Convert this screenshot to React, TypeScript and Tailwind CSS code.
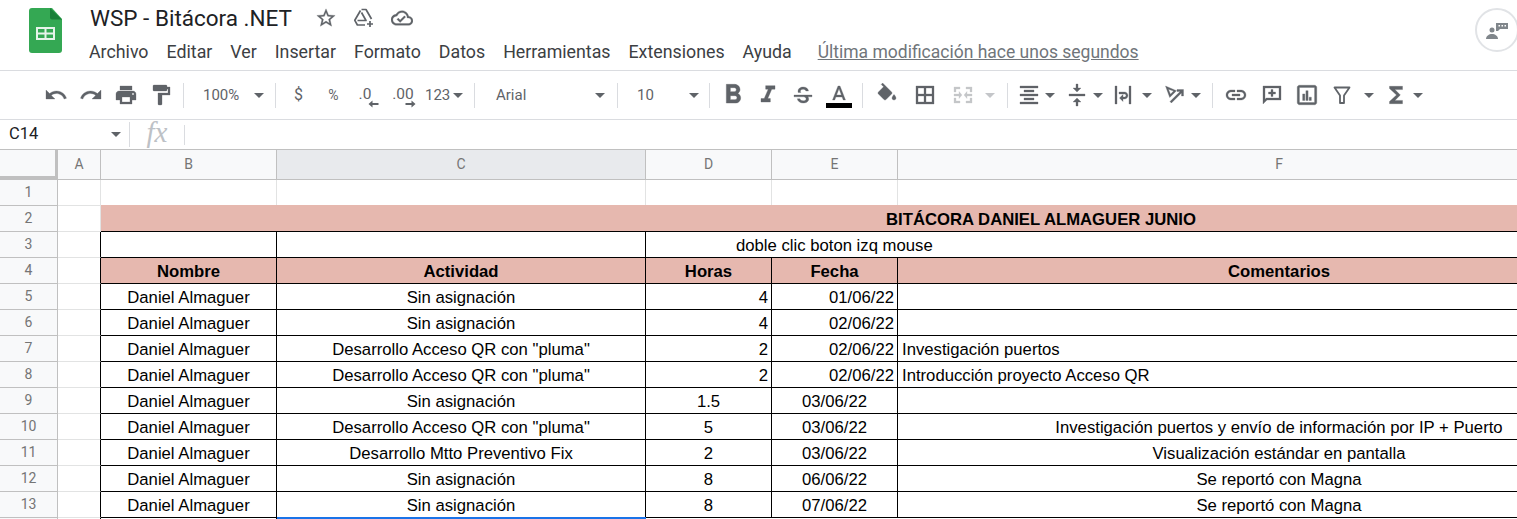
import type { ReactNode } from "react";

const ICON = {
  undo: "M12.5 8c-2.65 0-5.05.99-6.9 2.6L2 7v9h9l-3.62-3.62c1.39-1.16 3.16-1.88 5.12-1.88 3.54 0 6.55 2.31 7.6 5.5l2.37-.78C21.08 11.03 17.15 8 12.5 8z",
  redo: "M18.4 10.6C16.55 8.99 14.15 8 11.5 8c-4.65 0-8.58 3.03-9.96 7.22L3.9 16c1.05-3.19 4.05-5.5 7.6-5.5 1.95 0 3.73.72 5.12 1.88L13 16h9V7l-3.6 3.6z",
  print: "M19 8H5c-1.66 0-3 1.34-3 3v6h4v4h12v-4h4v-6c0-1.66-1.34-3-3-3zm-3 11H8v-5h8v5zm3-7c-.55 0-1-.45-1-1s.45-1 1-1 1 .45 1 1-.45 1-1 1zm-1-9H6v4h12V3z",
  paint: "M18 4V3c0-.55-.45-1-1-1H5c-.55 0-1 .45-1 1v4c0 .55.45 1 1 1h12c.55 0 1-.45 1-1V6h1v4H9v11c0 .55.45 1 1 1h2c.55 0 1-.45 1-1v-9h8V4h-3z",
  star: "M22 9.24l-7.19-.62L12 2 9.19 8.63 2 9.24l5.46 4.73L5.82 21 12 17.27 18.18 21l-1.63-7.03L22 9.24zM12 15.4l-3.76 2.27 1-4.28-3.32-2.88 4.38-.38L12 6.1l1.71 4.04 4.38.38-3.32 2.88 1 4.28L12 15.4z",
  cloud: "M19.35 10.04C18.67 6.59 15.64 4 12 4 9.11 4 6.6 5.64 5.35 8.04 2.34 8.36 0 10.91 0 14c0 3.31 2.69 6 6 6h13c2.76 0 5-2.24 5-5 0-2.64-2.05-4.78-4.65-4.96zM19 18H6c-2.21 0-4-1.79-4-4 0-2.05 1.53-3.76 3.56-3.97l1.07-.11.5-.95C8.08 7.14 9.94 6 12 6c2.62 0 4.88 1.86 5.39 4.43l.3 1.5 1.53.11c1.56.1 2.78 1.41 2.78 2.96 0 1.65-1.35 3-3 3zm-9-3.82l-2.09-2.09L6.5 13.5 10 17l6-6-1.41-1.41z",
  bold: "M15.6 10.79c.97-.67 1.65-1.77 1.65-2.79 0-2.26-1.75-4-4-4H7v14h7.04c2.09 0 3.71-1.7 3.71-3.79 0-1.52-.86-2.82-2.15-3.42zM10 6.5h3c.83 0 1.5.67 1.5 1.5s-.67 1.5-1.5 1.5h-3v-3zm3.5 9H10v-3h3.5c.83 0 1.5.67 1.5 1.5s-.67 1.5-1.5 1.5z",
  italic: "M10 4v3h2.21l-3.42 8H6v3h8v-3h-2.21l3.42-8H18V4z",
  strike: "M7.2 9.5c-.1-.4-.2-.8-.2-1.3C7 5.7 9.2 4 12.2 4c2.8 0 4.9 1.5 5.3 4h-2.6c-.3-1.1-1.3-1.8-2.8-1.8-1.6 0-2.7.8-2.7 2 0 .5.2.9.5 1.3H7.2zM3 12h18v1.8h-4.1c.5.7.8 1.4.8 2.2 0 2.5-2.3 4-5.6 4-3 0-5.4-1.5-5.8-4.2h2.6c.3 1.3 1.6 2 3.2 2 1.8 0 3-.7 3-1.8 0-.9-.7-1.6-2-2.2H3z",
  textA: "M11 3L5.5 17h2.25l1.12-3h6.25l1.12 3h2.25L13 3h-2zm-1.38 9L12 5.67 14.38 12H9.62z",
  fill: "M16.56 8.94L7.62 0 6.21 1.41l2.38 2.38-5.15 5.15c-.59.59-.59 1.54 0 2.12l5.5 5.5c.29.29.68.44 1.06.44s.77-.15 1.06-.44l5.5-5.5c.59-.58.59-1.53 0-2.12zM19 11.5s-2 2.17-2 3.5c0 1.1.9 2 2 2s2-.9 2-2c0-1.33-2-3.5-2-3.5z",
  borders: "M3 3v18h18V3H3zm8 16H5v-6h6v6zm0-8H5V5h6v6zm8 8h-6v-6h6v6zm0-8h-6V5h6v6z",
  merge: "M3 4h6v2H5v3H3V4zm12 0h6v5h-2V6h-4V4zM3 15h2v3h4v2H3v-5zm16 0h2v5h-6v-2h4v-3zM3 11h5V8.5l3 3.5-3 3.5V13H3v-2zm18 0v2h-5v2.5L13 12l3-3.5V11h5z",
  align: "M7 15v2h10v-2H7zm-4 6h18v-2H3v2zm0-8h18v-2H3v2zm4-6v2h10V7H7zM3 3v2h18V3H3z",
  valign: "M8 19h3v4h2v-4h3l-4-4-4 4zm8-14h-3V1h-2v4H8l4 4 4-4zM4 11v2h16v-2H4z",
  wrap: "M4 3h2v18H4V3zm14 0h2v18h-2V3zM8 9h5.5c1.9 0 3.5 1.6 3.5 3.5S15.400 16 13.500 16H12v2.500L8.500 15l3.500-3.500V14h1.500c.8 0 1.500-.7 1.500-1.500s-.7-1.500-1.500-1.500H8V9z",
  rotate: "M2.500 3l11 4.700L6.700 14.500 2.500 3zm2.900 3.200l2.100 5 3.100-3.100-5.200-1.900zM20.500 6.500V13h-2V9.900L8.400 20l-1.400-1.400L17.100 8.500H14v-2h6.500z",
  link: "M3.900 12c0-1.710 1.390-3.100 3.100-3.100h4V7H7c-2.760 0-5 2.240-5 5s2.240 5 5 5h4v-1.900H7c-1.710 0-3.100-1.390-3.100-3.100zM8 13h8v-2H8v2zm9-6h-4v1.900h4c1.710 0 3.100 1.390 3.100 3.100s-1.390 3.100-3.100 3.100h-4V17h4c2.760 0 5-2.240 5-5s-2.240-5-5-5z",
  comment: "M21 3H3v18l4-4h14V3zm-2 12H6.200L5 16.200V5h14v10zM11 6.500h2V9h2.500v2H13v2.500h-2V11H8.500V9H11V6.500z",
  chart: "M19 3H5c-1.100 0-2 .9-2 2v14c0 1.100.9 2 2 2h14c1.100 0 2-.9 2-2V5c0-1.100-.9-2-2-2zm0 16H5V5h14v14zM8 11h2v6H8zm3-3h2v9h-2zm3 6h2v3h-2z",
  sigma: "M18 4H6v2l6.500 6L6 18v2h12v-3h-7l5-5-5-5h7z",
};

function Icon({ d, size = 24, color = "#5f6368" }: { d: string; size?: number; color?: string }) {
  return (
    <svg width={size} height={size} viewBox="0 0 24 24" fill={color} stroke={color} strokeWidth="0.3">
      <path d={d} />
    </svg>
  );
}

function Caret({ className = "w-[10px]", light }: { className?: string; light?: boolean }) {
  return (
    <div className={`flex shrink-0 items-center justify-center ${className}`}>
      <div className={`h-0 w-0 shrink-0 border-x-[5.5px] border-t-[5.5px] border-x-transparent ${light ? "border-t-[#c4c6c9]" : "border-t-[#5f6368]"}`} />
    </div>
  );
}

function Slot({ className, children }: { className: string; children: ReactNode }) {
  return <div className={`flex h-full shrink-0 items-center justify-center ${className}`}>{children}</div>;
}

function Divider({ className = "" }: { className?: string }) {
  return (
    <div className={`flex h-full w-[11px] shrink-0 items-center justify-center ${className}`}>
      <div className="h-[25px] w-px bg-[#dadce0]" />
    </div>
  );
}

function DecimalIcon({ label, textX, arrowX, dir }: { label: string; textX: number; arrowX: number; dir: "left" | "right" }) {
  return (
    <svg width="34" height="30" viewBox="0 0 34 30">
      <text x={textX} y="19" textAnchor="middle" fontSize="15.500" fontFamily="Roboto, sans-serif" fill="#5f6368">
        {label}
      </text>
      <g transform={`translate(${arrowX} 24)`} fill="#5f6368">
        {dir === "left" ? <path d="M0 0l4-3.500v2.500h6v2H4V3.500z" /> : <path d="M10 0L6-3.500v2.500H0v2h6V3.500z" />}
      </g>
    </svg>
  );
}

function Toolbar() {
  return (
    <div className="flex h-[49px] items-center border-b border-[#dadce0] pl-[38px] font-['Roboto',sans-serif] text-[15px] text-[#5f6368]">
      <Slot className="w-[35px]"><Icon d={ICON.undo} /></Slot>
      <Slot className="w-[35px]"><Icon d={ICON.redo} /></Slot>
      <Slot className="w-[35px]"><Icon d={ICON.print} /></Slot>
      <Slot className="w-[35px]"><Icon d={ICON.paint} /></Slot>
      <Divider />
      <Slot className="w-[81px] !justify-start pl-[14px]">
        <span className="w-[51px]">100%</span>
        <Caret />
      </Slot>
      <Divider />
      <Slot className="w-[35px] text-[16px]">$</Slot>
      <Slot className="w-[35px] text-[14px]">%</Slot>
      <Slot className="w-[35px]"><DecimalIcon label=".0" textX={13} arrowX={16.5} dir="left" /></Slot>
      <Slot className="w-[35px]"><DecimalIcon label=".00" textX={16} arrowX={18.5} dir="right" /></Slot>
      <Slot className="w-[48px] !justify-start pl-[4px]">
        <span className="w-[27px]">123</span>
        <Caret className="w-[12px]" />
      </Slot>
      <Divider />
      <Slot className="w-[132px] !justify-start pl-[16px]">
        <span className="w-[99px]">Arial</span>
        <Caret />
      </Slot>
      <Divider />
      <Slot className="w-[81px] !justify-start pl-[14px]">
        <span className="w-[52px]">10</span>
        <Caret />
      </Slot>
      <Divider />
      <Slot className="w-[35px]"><Icon d={ICON.bold} size={32} /></Slot>
      <Slot className="w-[35px]"><Icon d={ICON.italic} size={28} /></Slot>
      <Slot className="w-[35px]"><Icon d={ICON.strike} size={24} /></Slot>
      <Slot className="w-[37px] flex-col">
        <Icon d={ICON.textA} size={24} />
        <div className="mt-[-4px] h-[5px] w-[26px] bg-black" />
      </Slot>
      <Divider />
      <Slot className="w-[38px]"><Icon d={ICON.fill} size={24} /></Slot>
      <Slot className="w-[38px]"><Icon d={ICON.borders} /></Slot>
      <Slot className="w-[38px]"><Icon d={ICON.merge} color="#c4c6c9" /></Slot>
      <Caret className="w-[16px]" light />
      <Divider className="ml-[4px]" />
      <Slot className="w-[32px]"><Icon d={ICON.align} /></Slot>
      <Caret />
      <Slot className="ml-[6px] w-[32px]"><Icon d={ICON.valign} /></Slot>
      <Caret />
      <Slot className="ml-[4px] w-[32px]"><Icon d={ICON.wrap} /></Slot>
      <Caret className="ml-[3px] w-[10px]" />
      <Slot className="ml-[7px] w-[32px]"><Icon d={ICON.rotate} /></Slot>
      <Caret />
      <Divider className="ml-[6px]" />
      <Slot className="w-[36px]"><Icon d={ICON.link} /></Slot>
      <Slot className="w-[35px]"><Icon d={ICON.comment} /></Slot>
      <Slot className="w-[35px]"><Icon d={ICON.chart} size={26} /></Slot>
      <Slot className="w-[36px]">
        <svg width="24" height="24" viewBox="0 0 24 24" fill="none" stroke="#5f6368" strokeWidth="1.800">
          <path d="M4.500 4.500h15L14 12.500V20h-4v-7.500z" strokeLinejoin="round" />
        </svg>
      </Slot>
      <Caret className="ml-[4px] w-[10px]" />
      <Slot className="ml-[6px] w-[32px]"><Icon d={ICON.sigma} size={26} /></Slot>
      <Caret className="ml-[1px] w-[10px]" />
    </div>
  );
}

function Header() {
  const menu = ["Archivo", "Editar", "Ver", "Insertar", "Formato", "Datos", "Herramientas", "Extensiones", "Ayuda"];
  return (
    <div className="flex h-[71px] border-b border-[#dadce0] font-['Roboto',sans-serif]">
      <div className="w-[89px] shrink-0 pl-[29px] pt-[8px]">
        <svg width="33" height="45" viewBox="0 0 33 45">
          <path d="M3 0h20l10 11v31a3 3 0 0 1-3 3H3a3 3 0 0 1-3-3V3a3 3 0 0 1 3-3z" fill="#34a853" />
          <path d="M21 0l12 11.500H23a2 2 0 0 1-2-2z" fill="#188038" />
          <path d="M7 19h19v13H7z" fill="#e6f4ea" />
          <path d="M9 21h6.500v3.500H9zm8.500 0H24v3.500h-6.500zM9 26.500h6.500V30H9zm8.500 0H24V30h-6.500z" fill="#34a853" />
        </svg>
      </div>
      <div className="flex-1 pt-[4px]">
        <div className="flex h-[28px] items-center">
          <span className="w-[227px] pl-[1px] text-[22.500px] leading-none text-[#202124]">WSP - Bitácora .NET</span>
          <div className="ml-[-1px]"><Icon d={ICON.star} size={22} /></div>
          <svg width="24" height="24" viewBox="0 0 24 24" fill="none" stroke="#5f6368" strokeWidth="1.700" className="ml-[15px]">
            <path d="M9.500 3.500h4.500l5.500 9.500M8.500 4.500L2.800 14.300l2.600 4.700H13M5.500 14.500h8.500L9.500 6.500" strokeLinejoin="round" />
            <path d="M18 15v6M15 18h6" />
          </svg>
          <div className="ml-[15px]"><Icon d={ICON.cloud} size={22} /></div>
        </div>
        <div className="mt-[8px] flex items-center gap-[18px] text-[17.800px] leading-[24px] text-[#3c4043]">
          {menu.map((m) => (
            <span key={m}>{m}</span>
          ))}
          <span className="ml-[8px] text-[17.500px] text-[#70757a] underline">Última modificación hace unos segundos</span>
        </div>
      </div>
      <div className="mr-[-2px] mt-[8px] flex h-[44px] w-[44px] shrink-0 items-center justify-center rounded-full border-2 border-[#e1e3e6]">
        <svg width="26" height="26" viewBox="0 0 26 26" fill="#80868b">
          <circle cx="8" cy="13" r="2.500" />
          <path d="M2 22c0-3 3-5 6-5s6 2 6 5z" />
          <path d="M12 6h12v6h-8l-2 2h-2z" />
          <path d="M14.500 8h1.500v1.500h-1.500zm3 0H19v1.500h-1.500zm3 0H22v1.500h-1.500z" fill="#fff" />
        </svg>
      </div>
    </div>
  );
}

function FormulaBar() {
  return (
    <div className="flex h-[30px] items-center border-b border-[#c0c0c0]">
      <span className="w-[111px] pl-[9px] font-['Roboto',sans-serif] text-[16.500px] text-[#202124]">C14</span>
      <Caret className="w-[10px]" />
      <div className="ml-[8px] h-[25px] w-px bg-[#dadce0]" />
      <span className="mt-[-4px] w-[54px] text-center font-['Liberation_Serif',serif] text-[29px] italic leading-none text-[#bdc1c6]">fx</span>
      <div className="h-[20px] w-px bg-[#dadce0]" />
    </div>
  );
}

const grey = "border-[#c0c0c0]";
const light = "border-[#e2e3e3]";
const cellBase = "flex items-end overflow-hidden whitespace-nowrap border-b border-r pb-[1px] leading-[20px] border-black text-black";

const data: Array<[string, string, boolean, string, string, "l" | "c"]> = [
  ["Sin asignación", "4", false, "01/06/22", "", "l"],
  ["Sin asignación", "4", false, "02/06/22", "", "l"],
  ['Desarrollo Acceso QR con "pluma"', "2", false, "02/06/22", "Investigación puertos", "l"],
  ['Desarrollo Acceso QR con "pluma"', "2", false, "02/06/22", "Introducción proyecto Acceso QR", "l"],
  ["Sin asignación", "1.5", true, "03/06/22", "", "c"],
  ['Desarrollo Acceso QR con "pluma"', "5", true, "03/06/22", "Investigación puertos y envío de información por IP + Puerto", "c"],
  ["Desarrollo Mtto Preventivo Fix", "2", true, "03/06/22", "Visualización estándar en pantalla", "c"],
  ["Sin asignación", "8", true, "06/06/22", "Se reportó con Magna", "c"],
  ["Sin asignación", "8", true, "07/06/22", "Se reportó con Magna", "c"],
];

function RowHead({ n }: { n?: number }) {
  return (
    <div className={`flex items-center justify-center border-b border-r bg-[#f8f9fa] font-['Roboto',sans-serif] text-[14px] text-[#757575] ${grey}`}>
      {n}
    </div>
  );
}

function Sheet() {
  const cols = ["A", "B", "C", "D", "E", "F"];
  return (
    <div className="grid grid-cols-[58px_43px_176px_369px_126px_126px_763px_320px] grid-rows-[30px] auto-rows-[26px] font-['Liberation_Sans',sans-serif] text-[16.700px]">
      <div className={`border-b-[4px] border-r-[3px] bg-[#f8f9fa] ${grey}`} />
      {cols.map((c) => (
        <div
          key={c}
          className={`flex items-center justify-center border-b border-r font-['Roboto',sans-serif] text-[14px] text-[#757575] ${grey} ${c === "C" ? "bg-[#e8eaed]" : "bg-[#f8f9fa]"}`}
        >
          {c}
        </div>
      ))}
      <div className={`border-b bg-[#f8f9fa] ${grey}`} />

      <RowHead n={1} />
      {[0, 1, 2, 3, 4, 5, 6].map((i) => (
        <div key={i} className={`border-b border-r ${light}`} />
      ))}

      <RowHead n={2} />
      <div className={`border-b border-r ${light}`} />
      <div className={`${cellBase} col-span-6 -mt-px bg-[#e6b8af] pl-[785px] font-bold`}>BITÁCORA DANIEL ALMAGUER JUNIO</div>

      <RowHead n={3} />
      <div className={`${cellBase} border-b-[#e2e3e3]`} />
      <div className={cellBase} />
      <div className={cellBase} />
      <div className={`${cellBase} col-span-4 pl-[90px]`}>doble clic boton izq mouse</div>

      <RowHead n={4} />
      <div className={`${cellBase} border-b-[#e2e3e3]`} />
      {["Nombre", "Actividad", "Horas", "Fecha", "Comentarios"].map((h) => (
        <div key={h} className={`${cellBase} justify-center bg-[#e6b8af] font-bold`}>{h}</div>
      ))}
      <div className={`${cellBase} bg-[#e6b8af]`} />

      {data.map(([act, hrs, hc, date, com, fa], i) => (
        <div key={i} className="contents">
          <RowHead n={i + 5} />
          <div className={`${cellBase} border-b-[#e2e3e3]`} />
          <div className={`${cellBase} justify-center`}>Daniel Almaguer</div>
          <div className={`${cellBase} justify-center`}>{act}</div>
          <div className={`${cellBase} ${hc ? "justify-center" : "justify-end pr-[3px]"}`}>{hrs}</div>
          <div className={`${cellBase} ${hc ? "justify-center" : "justify-end pr-[3px]"}`}>{date}</div>
          <div className={`${cellBase} ${fa === "c" ? "justify-center" : "pl-[4px]"}`}>{com}</div>
          <div className={cellBase} />
        </div>
      ))}

      <RowHead />
      <div className="border-r border-black" />
      <div className="border-r border-black" />
      <div className="-mt-px border-t-2 border-[#1a73e8]" />
    </div>
  );
}

export default function App() {
  return (
    <div className="h-[519px] w-[1517px] overflow-hidden bg-white">
      <Header />
      <Toolbar />
      <FormulaBar />
      <Sheet />
    </div>
  );
}
